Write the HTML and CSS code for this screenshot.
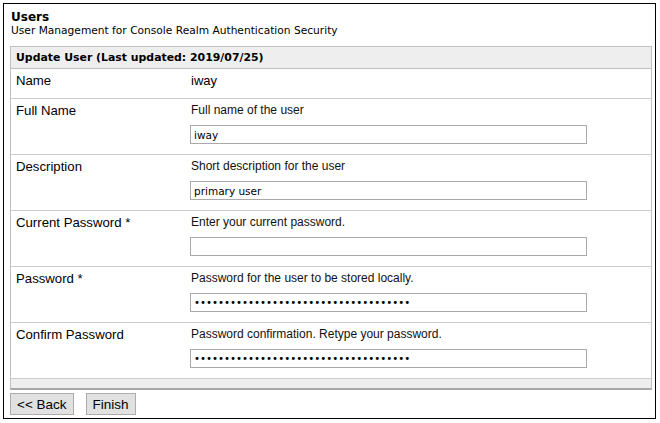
FILE: index.html
```html
<!DOCTYPE html>
<html>
<head>
<meta charset="utf-8">
<link rel="stylesheet" href="styles.css">
</head>
<body>
<div class="frame">
  <div class="title">Users</div>
  <div class="subtitle">User Management for Console Realm Authentication Security</div>
  <div class="panel">
    <div class="phead">Update User (Last updated: 2019/07/25)</div>
    <div class="row row-short">
      <div class="lbl">Name</div>
      <div class="val plain">iway</div>
    </div>
    <div class="row">
      <div class="lbl">Full Name</div>
      <div class="val">
        <div class="desc">Full name of the user</div>
        <input class="field" type="text" value="iway">
      </div>
    </div>
    <div class="row">
      <div class="lbl">Description</div>
      <div class="val">
        <div class="desc">Short description for the user</div>
        <input class="field" type="text" value="primary user">
      </div>
    </div>
    <div class="row">
      <div class="lbl">Current Password *</div>
      <div class="val">
        <div class="desc">Enter your current password.</div>
        <input class="field" type="text" value="">
      </div>
    </div>
    <div class="row">
      <div class="lbl">Password *</div>
      <div class="val">
        <div class="desc">Password for the user to be stored locally.</div>
        <input class="field pw" type="password" value="dddddddddddddddddddddddddddddddddddd">
      </div>
    </div>
    <div class="row">
      <div class="lbl">Confirm Password</div>
      <div class="val">
        <div class="desc">Password confirmation. Retype your password.</div>
        <input class="field pw" type="password" value="dddddddddddddddddddddddddddddddddddd">
      </div>
    </div>
    <div class="pfoot"></div>
  </div>
  <div class="buttons">
    <button class="btn">&lt;&lt; Back</button>
    <button class="btn">Finish</button>
  </div>
</div>
</body>
</html>
```

FILE: styles.css
```css
html, body {
  margin: 0;
  padding: 0;
  background: #fff;
}
.frame {
  margin: 3px 0 0 3px;
  width: 651px;
  height: 414px;
  border: 1px solid #000;
  box-sizing: content-box;
  font-family: "DejaVu Sans", Verdana, sans-serif;
  color: #000;
}
.title {
  font-weight: bold;
  font-size: 12px;
  line-height: 14px;
  padding: 6px 0 0 7px;
}
.subtitle {
  font-size: 10.65px;
  line-height: 14px;
  padding-left: 7px;
}
.panel {
  margin: 8px 3px 0 6px;
  border: 1px solid #c0c0c0;
  border-bottom: 2px solid #a8a8a8;
}
.phead {
  background: #eeeeee;
  height: 21px;
  border-bottom: 1px solid #c0c0c0;
  font-weight: bold;
  font-size: 10.9px;
  line-height: 21px;
  padding-left: 5px;
}
.row {
  display: grid;
  grid-template-columns: 175px 1fr;
  height: 55px;
  border-bottom: 1px solid #cccccc;
  font-family: "Liberation Sans", Arial, sans-serif;
}
.row-short {
  height: 29px;
}
.lbl {
  font-size: 13.2px;
  line-height: 15px;
  padding: 4px 0 0 5px;
}
.val {
  padding: 4px 0 0 5px;
}
.plain {
  font-size: 13px;
  line-height: 15px;
}
.desc {
  font-size: 12px;
  line-height: 14px;
  color: #111;
  margin-bottom: 8px;
}
.field {
  display: block;
  box-sizing: border-box;
  width: 397px;
  height: 19px;
  margin: 0 0 0 -1px;
  padding: 0 3px;
  border: 1px solid #a9a9a9;
  font-family: "DejaVu Sans", Verdana, sans-serif;
  font-size: 10.5px;
  color: #000;
  background: #fff;
  outline: none;
}
.pw {
  font-size: 10.2px;
  letter-spacing: 0;
}
.pfoot {
  height: 9px;
  background: #eeeeee;
}
.buttons {
  display: flex;
  gap: 12px;
  padding: 3px 0 0 6px;
}
.btn {
  height: 22px;
  margin: 0;
  padding: 0 6px;
  border: 1px solid #adadad;
  background: #e1e1e1;
  font-family: "Liberation Sans", Arial, sans-serif;
  font-size: 13.5px;
  color: #000;
}
```
